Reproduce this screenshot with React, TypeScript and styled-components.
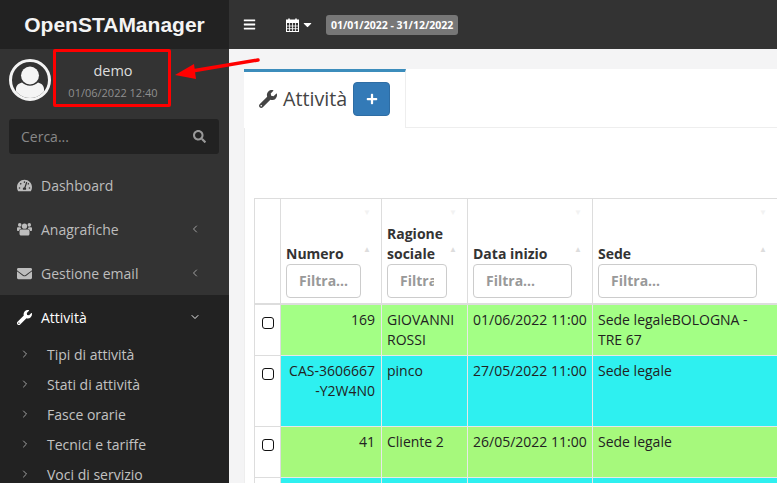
import React from "react";
import styled, { createGlobalStyle } from "styled-components";
import { FaBars, FaCaretDown, FaEnvelope, FaPlus, FaSearch, FaTachometerAlt, FaWrench } from "react-icons/fa";
import { ChevronDown, ChevronLeft, ChevronRight } from "lucide-react";

const GlobalStyle = createGlobalStyle`
  html, body {
    margin: 0;
    height: 100%;
    overflow: hidden;
    background: #f4f4f5;
  }
  * { box-sizing: border-box; }
  body {
    font-family: "Open Sans", "Liberation Sans", sans-serif;
    font-size: 14px;
    color: #333;
  }
`;

const Page = styled.div`
  position: relative;
  display: grid;
  grid-template-columns: 229px 1fr;
  grid-template-rows: 49px 1fr;
  width: 777px;
  height: 483px;
  overflow: hidden;
`;

const Logo = styled.div`
  display: flex;
  align-items: center;
  justify-content: center;
  background: #222;
  color: #f4f4f4;
  font-family: "Liberation Sans", Arial, sans-serif;
  font-weight: 700;
  font-size: 21px;
`;

const TopBar = styled.header`
  display: flex;
  align-items: center;
  background: #333;
  color: #fff;
  padding-left: 14px;
`;

const CalendarToggle = styled.span`
  display: flex;
  align-items: center;
  margin-left: 30px;
  svg + svg { margin-left: 2px; font-size: 13px; }
`;

const DateBadge = styled.span`
  margin-left: 12px;
  padding: 3px 5px;
  border-radius: 3px;
  background: #777;
  color: #fff;
  font-size: 10.5px;
  font-weight: 700;
  line-height: 14px;
`;

const Sidebar = styled.aside`
  background: #333;
  overflow: hidden;
`;

const UserPanel = styled.div`
  display: flex;
  height: 70px;
  padding: 10px 0 0 9px;
`;

const UserInfo = styled.div`
  width: 118px;
  margin-left: 3px;
  text-align: center;
`;

const UserName = styled.div`
  color: #ddd;
  font-size: 14.5px;
  line-height: 20px;
  margin-top: 2px;
`;

const UserDate = styled.div`
  color: #8f8f8f;
  font-size: 11px;
  line-height: 14px;
  margin-top: 5px;
`;

const SearchBox = styled.div`
  display: flex;
  align-items: center;
  justify-content: space-between;
  height: 35px;
  margin-left: 9px;
  width: 210px;
  padding: 0 13px 0 12px;
  border-radius: 3px;
  background: #222;
  color: #888;
  font-size: 14px;
  svg { font-size: 13px; color: #999; }
`;

const Nav = styled.nav`
  margin-top: 9px;
`;

const NavItem = styled.div<{ $active?: boolean }>`
  display: flex;
  align-items: center;
  height: 44px;
  padding: 0 28px 0 17px;
  background: ${(p) => (p.$active ? "#222" : "transparent")};
  color: ${(p) => (p.$active ? "#fff" : "#bdbdbd")};
  font-size: 14px;
`;

const NavIcon = styled.span`
  display: flex;
  justify-content: center;
  width: 15px;
  margin-right: 9px;
  font-size: 15px;
`;

const NavLabel = styled.span`
  flex: 1;
`;

const SubMenu = styled.div`
  background: #222;
  padding-bottom: 5px;
`;

const SubItem = styled.div`
  display: flex;
  align-items: center;
  height: 30px;
  padding-left: 19px;
  color: #c2c2c2;
  font-size: 14px;
  svg { margin-right: 16px; }
`;

const Content = styled.main`
  padding: 20px 0 0 15px;
  overflow: hidden;
`;

const Card = styled.section`
  background: #fff;
  height: 100%;
  padding-left: 9px;
  border-left: 1px solid #eee;
`;

const TabBar = styled.div`
  display: flex;
  height: 59px;
  margin-left: -10px;
  border-bottom: 1px solid #eee;
`;

const ActiveTab = styled.div`
  display: flex;
  align-items: center;
  width: 162px;
  height: 59px;
  padding: 0 0 3px 15px;
  border-top: 3px solid #3c8dbc;
  border-right: 1px solid #eee;
  background: #fff;
  color: #444;
  font-size: 19.7px;
  svg { font-size: 18px; margin-right: 6px; }
`;

const AddButton = styled.span`
  display: flex;
  align-items: center;
  justify-content: center;
  width: 37px;
  height: 34px;
  margin-left: 6px;
  border: 1px solid #2e6da4;
  border-radius: 4px;
  background: #337ab7;
  color: #fff;
  svg { font-size: 12px; margin: 0; }
`;

const Table = styled.table`
  width: 523px;
  margin-top: 70px;
  border-collapse: collapse;
  table-layout: fixed;
`;

const HeadCell = styled.th`
  position: relative;
  height: 105px;
  padding: 5px 20px 5px 5px;
  vertical-align: bottom;
  border: 1px solid #ddd;
  border-bottom-width: 2px;
  text-align: left;
  font-weight: 700;
  font-size: 14px;
  line-height: 20px;
  color: #333;
`;

const SortMark = styled.span<{ $top?: boolean }>`
  position: absolute;
  right: 10px;
  top: ${(p) => (p.$top ? "9px" : "46px")};
  color: ${(p) => (p.$top ? "#f2f2f2" : "#ddd")};
  font-size: 8px;
  line-height: 8px;
`;

const FilterInput = styled.input`
  display: block;
  width: 100%;
  height: 34px;
  padding: 0 12px;
  border: 1px solid #ccc;
  border-radius: 4px;
  background: #fff;
  font-family: inherit;
  font-weight: 700;
  font-size: 14px;
  &::placeholder {
    color: #999;
    opacity: 1;
  }
`;

const BodyCell = styled.td<{ $bg?: string; $right?: boolean }>`
  padding: 5px ${(p) => (p.$right ? "6px" : "5px")} 5px 5px;
  vertical-align: top;
  border: 1px solid ${(p) => (p.$bg ? "#e8e8e8" : "#ddd")};
  background: ${(p) => p.$bg ?? "#fff"};
  color: #222;
  text-align: ${(p) => (p.$right ? "right" : "left")};
  font-size: 14px;
  line-height: 20px;
`;

const CheckCell = styled(BodyCell)`
  padding: 12px 0 0 7px;
`;

const CheckBox = styled.span`
  display: block;
  width: 12px;
  height: 12px;
  border: 1.5px solid #111;
  border-radius: 3px;
  background: #fff;
`;

const Callout = styled.div`
  position: absolute;
  left: 53px;
  top: 49px;
  width: 118px;
  height: 58px;
  border: 3px solid #f00;
  border-radius: 2px;
`;

const Arrow = styled.svg`
  position: absolute;
  left: 170px;
  top: 50px;
`;

const CalendarIcon = () => (
  <svg width="13" height="14" viewBox="0 0 13 14">
    <rect x="0.5" y="2" width="12" height="11.5" fill="none" stroke="#fff" />
    <rect x="0.5" y="2" width="12" height="3" fill="#fff" />
    <path d="M3 0.5v3M10 0.5v3" stroke="#fff" strokeWidth="1.6" />
    <path d="M0.5 8h12M0.5 10.7h12M3.5 5v8.5M6.5 5v8.5M9.5 5v8.5" stroke="#fff" strokeWidth="0.8" />
  </svg>
);

const UsersIcon = () => (
  <svg width="16" height="14" viewBox="0 0 16 14" fill="currentColor">
    <circle cx="8" cy="4" r="2.8" />
    <circle cx="2.9" cy="2.6" r="1.9" />
    <circle cx="13.1" cy="2.6" r="1.9" />
    <path d="M4 7.4h8c.8 0 1.3.7 1.3 1.6v3.4c0 .9-.7 1.6-1.6 1.6H4.3c-.9 0-1.6-.7-1.6-1.6V9c0-.9.5-1.6 1.3-1.6z" />
    <path d="M0 6.2C0 5.3.5 5 1.2 5h2.4c.2.7.5 1.2 1 1.6-1.4.2-2.4 1-2.6 2.4H.8C.3 9 0 8.7 0 8.2zM16 6.2c0-.9-.5-1.2-1.2-1.2h-2.4c-.2.7-.5 1.2-1 1.6 1.4.2 2.4 1 2.6 2.4h1.2c.5 0 .8-.3.8-.8z" />
  </svg>
);

const AvatarIcon = () => (
  <svg width="42" height="42" viewBox="0 0 42 42">
    <defs>
      <clipPath id="avatar-clip">
        <circle cx="21" cy="21" r="18" />
      </clipPath>
    </defs>
    <circle cx="21" cy="21" r="19.5" fill="none" stroke="#f4f4f4" strokeWidth="3" />
    <g clipPath="url(#avatar-clip)" fill="#f4f4f4">
      <circle cx="21" cy="16.5" r="9" />
      <path d="M7 42V30c0-3.500 2.500-5.500 6-6.500 2 2 4.800 3.200 8 3.200s6-1.200 8-3.200c3.500 1 6 3 6 6.500v12z" />
    </g>
  </svg>
);

const GREEN = "#a3ff85";
const LIME = "#a6f97c";
const CYAN = "#2ef0f0";

type Row = {
  bg: string;
  height: number;
  numero: React.ReactNode;
  ragione: React.ReactNode;
  data: string;
  sede: string;
};

const rows: Row[] = [
  { bg: GREEN, height: 51, numero: "169", ragione: "GIOVANNI ROSSI", data: "01/06/2022 11:00", sede: "Sede legaleBOLOGNA - TRE 67" },
  { bg: CYAN, height: 71, numero: <>CAS-3606667<br />-Y2W4N0</>, ragione: "pinco", data: "27/05/2022 11:00", sede: "Sede legale" },
  { bg: LIME, height: 51, numero: "41", ragione: "Cliente 2", data: "26/05/2022 11:00", sede: "Sede legale" },
  { bg: CYAN, height: 51, numero: "", ragione: "", data: "", sede: "" },
];

const columns = [
  { title: "Numero" },
  { title: <>Ragione<br />sociale</> },
  { title: "Data inizio" },
  { title: "Sede" },
];

const App = () => {
  return (
    <Page>
      <GlobalStyle />
      <Logo>OpenSTAManager</Logo>
      <TopBar>
        <FaBars size={13} />
        <CalendarToggle>
          <CalendarIcon />
          <FaCaretDown />
        </CalendarToggle>
        <DateBadge>01/01/2022 - 31/12/2022</DateBadge>
      </TopBar>

      <Sidebar>
        <UserPanel>
          <AvatarIcon />
          <UserInfo>
            <UserName>demo</UserName>
            <UserDate>01/06/2022 12:40</UserDate>
          </UserInfo>
        </UserPanel>
        <SearchBox>
          Cerca...
          <FaSearch />
        </SearchBox>
        <Nav>
          <NavItem>
            <NavIcon><FaTachometerAlt /></NavIcon>
            <NavLabel>Dashboard</NavLabel>
          </NavItem>
          <NavItem>
            <NavIcon><UsersIcon /></NavIcon>
            <NavLabel>Anagrafiche</NavLabel>
            <ChevronLeft size={12} strokeWidth={1.6} />
          </NavItem>
          <NavItem>
            <NavIcon><FaEnvelope /></NavIcon>
            <NavLabel>Gestione email</NavLabel>
            <ChevronLeft size={12} strokeWidth={1.6} />
          </NavItem>
          <NavItem $active>
            <NavIcon><FaWrench /></NavIcon>
            <NavLabel>Attività</NavLabel>
            <ChevronDown size={12} strokeWidth={1.8} />
          </NavItem>
          <SubMenu>
            {["Tipi di attività", "Stati di attività", "Fasce orarie", "Tecnici e tariffe", "Voci di servizio"].map((label) => (
              <SubItem key={label}>
                <ChevronRight size={12} strokeWidth={1.6} />
                {label}
              </SubItem>
            ))}
          </SubMenu>
        </Nav>
      </Sidebar>

      <Content>
        <Card>
          <TabBar>
            <ActiveTab>
              <FaWrench />
              Attività
              <AddButton><FaPlus /></AddButton>
            </ActiveTab>
          </TabBar>
          <Table>
            <colgroup>
              <col style={{ width: 26 }} />
              <col style={{ width: 101 }} />
              <col style={{ width: 86 }} />
              <col style={{ width: 125 }} />
              <col style={{ width: 185 }} />
            </colgroup>
            <thead>
              <tr>
                <HeadCell />
                {columns.map((col, i) => (
                  <HeadCell key={i}>
                    <SortMark $top>▼</SortMark>
                    <SortMark>▲</SortMark>
                    {col.title}
                    <FilterInput placeholder="Filtra..." readOnly />
                  </HeadCell>
                ))}
              </tr>
            </thead>
            <tbody>
              {rows.map((row, i) => (
                <tr key={i} style={{ height: row.height }}>
                  <CheckCell><CheckBox /></CheckCell>
                  <BodyCell $bg={row.bg} $right>{row.numero}</BodyCell>
                  <BodyCell $bg={row.bg}>{row.ragione}</BodyCell>
                  <BodyCell $bg={row.bg}>{row.data}</BodyCell>
                  <BodyCell $bg={row.bg}>{row.sede}</BodyCell>
                </tr>
              ))}
            </tbody>
          </Table>
        </Card>
      </Content>

      <Callout />
      <Arrow width="95" height="40" viewBox="0 0 95 40">
        <path d="M88 10 L22 21" stroke="#f00" strokeWidth="3.5" strokeLinecap="round" fill="none" />
        <path d="M5 25 L24 14 L26 29 Z" fill="#f00" />
      </Arrow>
    </Page>
  );
};

export default App;
